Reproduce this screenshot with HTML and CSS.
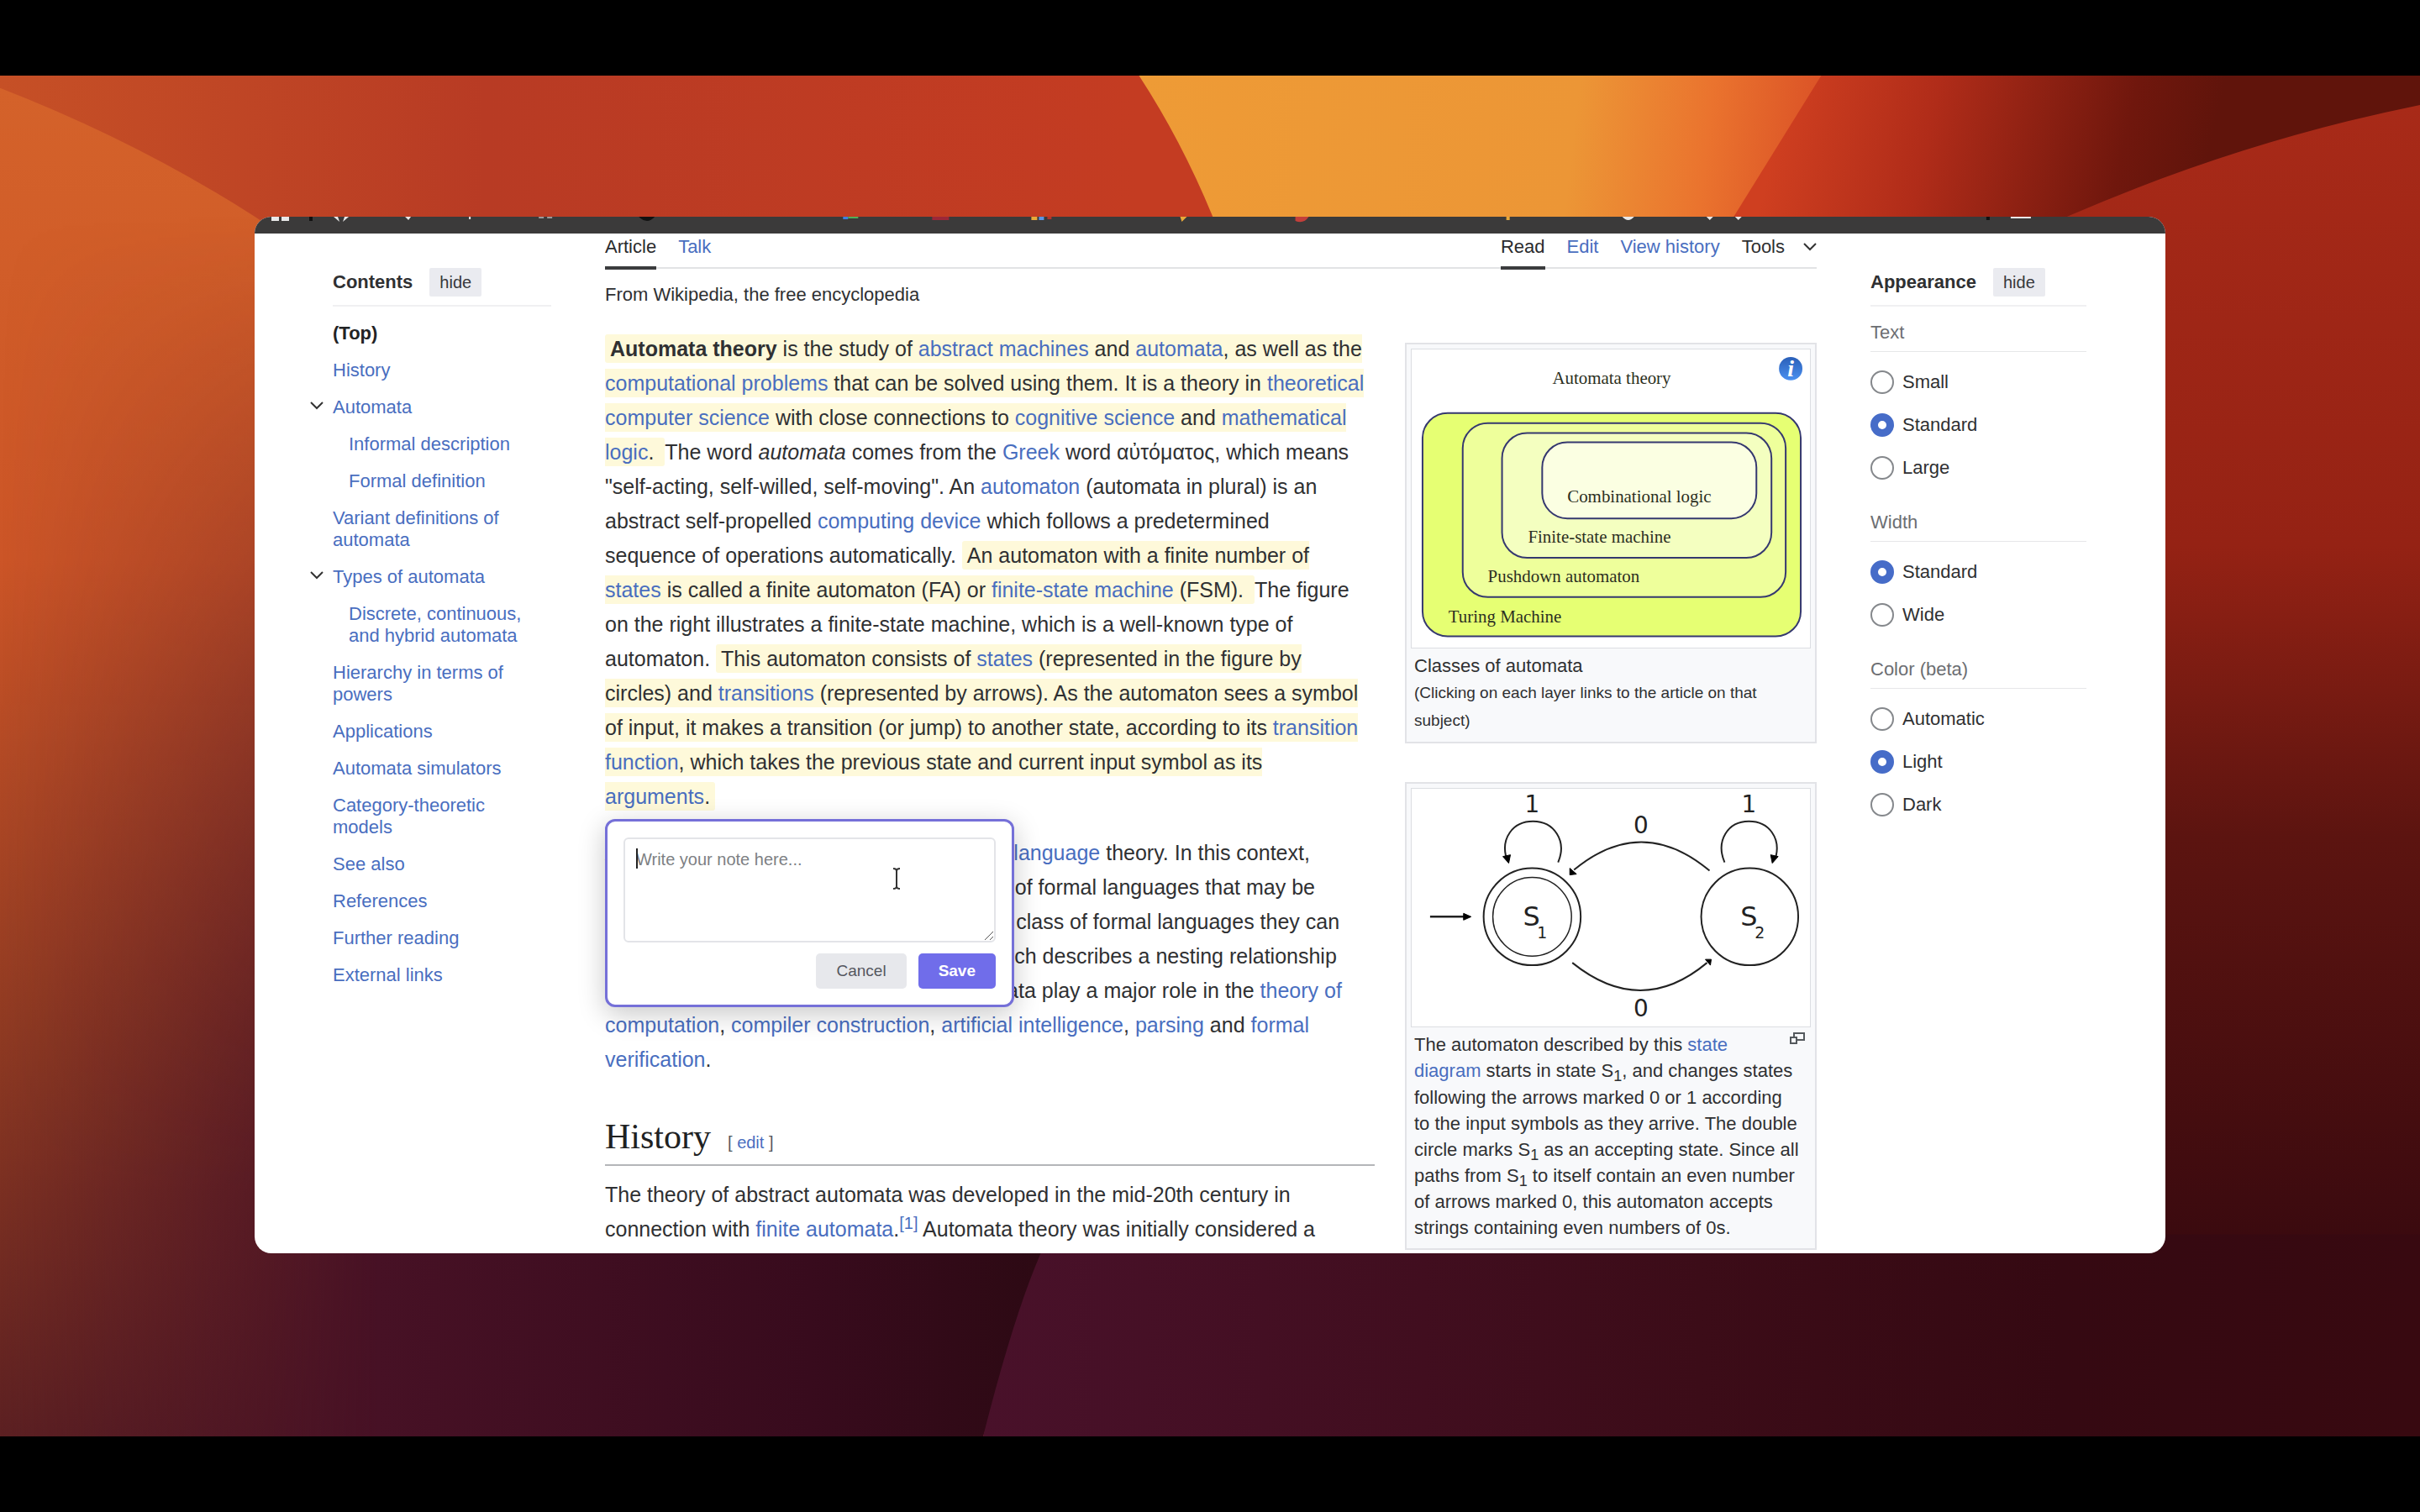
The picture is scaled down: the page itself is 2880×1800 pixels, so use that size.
FILE: index.html
```html
<!DOCTYPE html>
<html lang="en">
<head>
<meta charset="utf-8">
<title>Automata theory - Wikipedia</title>
<link rel="stylesheet" href="styles.css">
</head>
<body>

<div class="desktop">
    <svg class="wallpaper" viewBox="0 49 1568 882" preserveAspectRatio="none" aria-hidden="true">
        <defs>
            <linearGradient id="base" x1="0" y1="0" x2="1" y2="0">
                <stop offset="0" stop-color="#c65026"/>
                <stop offset="0.2" stop-color="#b83b24"/>
                <stop offset="0.47" stop-color="#c43c22"/>
            </linearGradient>
            <linearGradient id="left" x1="0" y1="0" x2="0" y2="1">
                <stop offset="0" stop-color="#d4622a"/>
                <stop offset="0.35" stop-color="#cc5527"/>
                <stop offset="0.7" stop-color="#8f3a22"/>
                <stop offset="1" stop-color="#5c2022"/>
            </linearGradient>
            <linearGradient id="left-shade" x1="0" y1="0" x2="1" y2="0">
                <stop offset="0" stop-color="#471125" stop-opacity="0"/>
                <stop offset="0.35" stop-color="#471125"/>
                <stop offset="0.75" stop-color="#380b1d"/>
                <stop offset="1" stop-color="#2b0912"/>
            </linearGradient>
            <linearGradient id="shade-fade" x1="0" y1="0" x2="0" y2="1">
                <stop offset="0" stop-color="#000"/>
                <stop offset="0.8" stop-color="#fff"/>
            </linearGradient>
            <mask id="lower" maskContentUnits="userSpaceOnUse">
                <rect x="0" y="140" width="700" height="791" fill="url(#shade-fade)"/>
            </mask>
            <linearGradient id="wedge" gradientUnits="userSpaceOnUse" x1="738" y1="60" x2="1170" y2="110">
                <stop offset="0" stop-color="#ee9b36"/>
                <stop offset="0.65" stop-color="#ec9636"/>
                <stop offset="0.85" stop-color="#ea732e"/>
                <stop offset="1" stop-color="#dc5527"/>
            </linearGradient>
            <linearGradient id="fold" gradientUnits="userSpaceOnUse" x1="1150" y1="90" x2="1420" y2="150">
                <stop offset="0" stop-color="#cf3f20"/>
                <stop offset="0.35" stop-color="#b02c19"/>
                <stop offset="0.8" stop-color="#70170d"/>
                <stop offset="1" stop-color="#60140b"/>
            </linearGradient>
            <linearGradient id="right" x1="0" y1="0" x2="0" y2="1">
                <stop offset="0" stop-color="#a82a18"/>
                <stop offset="0.33" stop-color="#952214"/>
                <stop offset="0.55" stop-color="#5c1410"/>
                <stop offset="0.85" stop-color="#3b0a0f"/>
                <stop offset="1" stop-color="#330811"/>
            </linearGradient>
            <linearGradient id="bottom" x1="0" y1="0" x2="1" y2="0">
                <stop offset="0" stop-color="#49112a"/>
                <stop offset="0.5" stop-color="#3c0c18"/>
                <stop offset="0.75" stop-color="#350912"/>
                <stop offset="1" stop-color="#380910"/>
            </linearGradient>
        </defs>
        <rect x="0" y="49" width="1568" height="882" fill="url(#base)"/>
        <path d="M0 57Q90 92 166 141L700 500L676 813L637 931H0Z" fill="url(#left)"/>
        <path d="M0 57Q90 92 166 141L700 500L676 813L637 931H0Z" fill="url(#left-shade)" mask="url(#lower)"/>
        <path d="M738 49Q766 92 786 141V300H1080L1125 141L1182 49Z" fill="url(#wedge)"/>
        <path d="M1180 49H1568V300H1100L1123 141Z" fill="url(#fold)"/>
        <path d="M1568 68Q1450 92 1338 141L1300 300V931H1568Z" fill="url(#right)"/>
        <path d="M680 800Q660 840 637 931H1568V800Z" fill="url(#bottom)"/>
    </svg>

    <div class="window">
        <svg class="browser-bar" viewBox="0 0 2273 20" preserveAspectRatio="none" aria-hidden="true">
            <path d="M20 0h9v5h-9zM32 0h9v5h-9zM94 0h5l2 6zM112 0h-5l-2 6zM179 0h7l-3 4zM255 0h2v3h-2zM2089 0h24v2h-24zM1627 0h14q-7 8-14 0zM1727 0h8l-4 4zM1761 0h8l-4 4z" fill="#e8e8e8"/>
            <path d="M338 0h6v2h-6zM348 0h6v2h-6z" fill="#9a9a9a"/>
            <path d="M65 0h4v5h-4zM457 0h19q-9 10-19 0zM2060 0h4v4h-4z" fill="#111"/>
            <path d="M700 0h6v3h-6z" fill="#3f7fe0"/>
            <path d="M706 0h12v2h-12z" fill="#4faf58"/>
            <path d="M806 0h20v4h-20z" fill="#9c2738"/>
            <path d="M924 0h7v4h-7zM1101 0h8l-6 6zM1489 0h4v4h-4z" fill="#e8a93a"/>
            <path d="M933 0h6v4h-6z" fill="#5a94e6"/>
            <path d="M943 0h5v3h-5z" fill="#b3342c"/>
            <path d="M1238 0h16q-6 9-16 5z" fill="#c33f3a"/>
        </svg>

        <div class="page">
            <nav class="contents">
                <div class="panel-title">
                    <h2>Contents</h2>
                    <button type="button">hide</button>
                </div>
                <ul>
                    <li><a class="current" href="#top">(Top)</a></li>
                    <li><a href="#history">History</a></li>
                    <li>
                        <svg class="toggle" viewBox="0 0 16 10"><path d="M1 1l7 7 7-7"/></svg>
                        <a href="#automata">Automata</a>
                        <ul>
                            <li><a href="#informal">Informal description</a></li>
                            <li><a href="#formal">Formal definition</a></li>
                        </ul>
                    </li>
                    <li><a href="#variants">Variant definitions of automata</a></li>
                    <li>
                        <svg class="toggle" viewBox="0 0 16 10"><path d="M1 1l7 7 7-7"/></svg>
                        <a href="#types">Types of automata</a>
                        <ul>
                            <li><a href="#discrete">Discrete, continuous, and hybrid automata</a></li>
                        </ul>
                    </li>
                    <li><a href="#hierarchy">Hierarchy in terms of powers</a></li>
                    <li><a href="#applications">Applications</a></li>
                    <li><a href="#simulators">Automata simulators</a></li>
                    <li><a href="#category">Category-theoretic models</a></li>
                    <li><a href="#see-also">See also</a></li>
                    <li><a href="#references">References</a></li>
                    <li><a href="#further">Further reading</a></li>
                    <li><a href="#external">External links</a></li>
                </ul>
            </nav>

            <main id="top">
                <div class="tabs">
                    <a class="active" href="#article">Article</a>
                    <a href="#talk">Talk</a>
                    <span class="spacer"></span>
                    <a class="active" href="#read">Read</a>
                    <a href="#edit">Edit</a>
                    <a href="#view-history">View history</a>
                    <button class="tools" type="button">Tools
                        <svg viewBox="0 0 16 10"><path d="M1 1l7 7 7-7"/></svg>
                    </button>
                </div>
                <p class="tagline">From Wikipedia, the free encyclopedia</p>

                <div class="article">
                    <div class="prose">
                        <div class="noted">
                            <p><mark><b>Automata theory</b> is the study of <a href="#">abstract machines</a> and <a href="#">automata</a>, as well as the <a href="#">computational problems</a> that can be solved using them. It is a theory in <a href="#">theoretical computer science</a> with close connections to <a href="#">cognitive science</a> and <a href="#">mathematical logic</a>.&nbsp;</mark>The word <i>automata</i> comes from the <a href="#">Greek</a> word αὐτόματος, which means "self-acting, self-willed, self-moving". An <a href="#">automaton</a> (automata in plural) is an abstract self-propelled <a href="#">computing device</a> which follows a predetermined<br>sequence of operations automatically. <mark>An automaton with a finite number of<br><a href="#">states</a> is called a finite automaton (FA) or <a href="#">finite-state machine</a> (FSM).&nbsp;</mark>The figure on the right illustrates a finite-state machine, which is a well-known type of automaton. <mark>This automaton consists of <a href="#">states</a> (represented in the figure by<br>circles) and <a href="#">transitions</a> (represented by arrows). As the automaton sees a symbol of input, it makes a transition (or jump) to another state, according to its <a href="#">transition function</a>, which takes the previous state and current input symbol as its <a href="#">arguments</a>.</mark></p>

                            <form class="note">
                                <label class="note-field">
                                    <textarea aria-label="Note" placeholder="Write your note here..."></textarea>
                                    <span class="caret"></span>
                                    <svg class="grip" viewBox="0 0 12 12"><path d="M1 11L11 1M7 11l4-4"/></svg>
                                    <svg class="ibeam" viewBox="0 0 12 28"><path d="M2 2q4 0 4 3q0-3 4-3M6 5v18M2 26q4 0 4-3q0 3 4 3"/></svg>
                                </label>
                                <div class="note-actions">
                                    <button class="cancel" type="button">Cancel</button>
                                    <button class="save" type="button">Save</button>
                                </div>
                            </form>
                        </div>

                        <p>Automata theory is closely related to <a href="#">formal language</a> theory. In this context, automata are used as finite representations of formal languages that may be infinite. Automata are often classified by the class of formal languages they can recognize, as in the Chomsky hierarchy, which describes a nesting relationship between major classes of automata. Automata play a major role in the <a href="#">theory of computation</a>, <a href="#">compiler construction</a>, <a href="#">artificial intelligence</a>, <a href="#">parsing</a> and <a href="#">formal verification</a>.</p>

                        <div class="section-title" id="history">
                            <h2>History</h2>
                            <span>[ <a href="#">edit</a> ]</span>
                        </div>
                        <p>The theory of abstract automata was developed in the mid-20th century in connection with <a href="#">finite automata</a>.<sup><a href="#">[1]</a></sup> Automata theory was initially considered a</p>
                    </div>

                    <aside class="figures">
                        <figure>
                            <svg class="picture" viewBox="-1 2 476 356">
                                <defs>
                                    <linearGradient id="info" x1="0" y1="0" x2="0" y2="1">
                                        <stop offset="0" stop-color="#2a5fb8"/>
                                        <stop offset="1" stop-color="#4a90f0"/>
                                    </linearGradient>
                                </defs>
                                <g stroke="#35386f" stroke-width="2">
                                    <rect x="12" y="78" width="452" height="267" rx="30" fill="#e6ff73"/>
                                    <rect x="60" y="90" width="386" height="208" rx="30" fill="#eeff9b"/>
                                    <rect x="107" y="102" width="322" height="149" rx="30" fill="#f4ffc0"/>
                                    <rect x="155" y="113" width="256" height="91" rx="30" fill="#fbffe2"/>
                                </g>
                                <g class="layer-names">
                                    <text x="238" y="43" text-anchor="middle">Automata theory</text>
                                    <text x="185" y="185">Combinational logic</text>
                                    <text x="138" y="233">Finite-state machine</text>
                                    <text x="90" y="280">Pushdown automaton</text>
                                    <text x="43" y="328">Turing Machine</text>
                                </g>
                                <circle cx="452" cy="25" r="14" fill="url(#info)"/>
                                <text class="info-letter" x="452" y="34" text-anchor="middle">i</text>
                            </svg>
                            <figcaption>Classes of automata<small>(Clicking on each layer links to the article on that subject)</small></figcaption>
                        </figure>

                        <figure>
                            <svg class="picture" viewBox="0 2 476 285">
                                <g fill="none" stroke="#222" stroke-width="2">
                                    <circle cx="144" cy="155" r="58"/>
                                    <circle cx="144" cy="155" r="47" stroke-width="1.5"/>
                                    <circle cx="404" cy="155" r="58"/>
                                    <path d="M175 90C186 64 170 41 145 41S107 62 113 84"/>
                                    <path d="M374 90C363 64 378 41 403 41S441 62 435 84"/>
                                    <path d="M356 100Q275 32 194 99"/>
                                    <path d="M192 210Q274 276 353 210"/>
                                    <path d="M22 155H64" stroke-width="2.5"/>
                                </g>
                                <path d="M109 83l9-2-2 10zM438 83l-9-2 2 10zM189 105v-8l8 7zM358 206l-7 0 6 7zM71 155l-9-4v8z" stroke="#000" fill="#000"/>
                                <g class="state-names">
                                    <text x="144" y="30" text-anchor="middle">1</text>
                                    <text x="403" y="30" text-anchor="middle">1</text>
                                    <text x="274" y="55" text-anchor="middle">0</text>
                                    <text x="274" y="274" text-anchor="middle">0</text>
                                    <text class="state" x="133" y="166">S</text>
                                    <text class="index" x="150" y="181">1</text>
                                    <text class="state" x="393" y="166">S</text>
                                    <text class="index" x="410" y="181">2</text>
                                </g>
                            </svg>
                            <figcaption><svg class="enlarge" viewBox="0 0 18 14"><path d="M5 6V1h12v8h-8M1 6h7v7H1z"/></svg>The automaton described by this <a href="#">state diagram</a> starts in state S<sub>1</sub>, and changes states following the arrows marked 0 or 1 according to the input symbols as they arrive. The double circle marks S<sub>1</sub> as an accepting state. Since all paths from S<sub>1</sub> to itself contain an even number of arrows marked 0, this automaton accepts strings containing even numbers of 0s.</figcaption>
                        </figure>
                    </aside>
                </div>
            </main>

            <aside class="appearance">
                <div class="panel-title">
                    <h2>Appearance</h2>
                    <button type="button">hide</button>
                </div>
                <fieldset>
                    <legend>Text</legend>
                    <label><input type="radio" name="text">Small</label>
                    <label><input type="radio" name="text" checked>Standard</label>
                    <label><input type="radio" name="text">Large</label>
                </fieldset>
                <fieldset>
                    <legend>Width</legend>
                    <label><input type="radio" name="width" checked>Standard</label>
                    <label><input type="radio" name="width">Wide</label>
                </fieldset>
                <fieldset>
                    <legend>Color (beta)</legend>
                    <label><input type="radio" name="color">Automatic</label>
                    <label><input type="radio" name="color" checked>Light</label>
                    <label><input type="radio" name="color">Dark</label>
                </fieldset>
            </aside>
        </div>
    </div>
</div>

</body>
</html>
```

FILE: styles.css
```css
* {
    box-sizing: border-box;
}

body {
    background-color: black;
    color: #2f3032;
    font-family: "Liberation Sans", Arial, sans-serif;
    font-size: 22px;
    height: 100vh;
    line-height: 26px;
    margin: 0;
    padding: 90px 0;
}

a {
    color: #496ebf;
    text-decoration: none;
}

h2, p, ul, figure, fieldset {
    margin: 0;
    padding: 0;
}

ul {
    list-style: none;
}

button {
    border-style: none;
    font-family: inherit;
}

.desktop {
    display: flex;
    height: 100%;
    padding: 168px 303px 218px;
    position: relative;
}

.wallpaper {
    height: 100%;
    left: 0;
    position: absolute;
    top: 0;
    width: 100%;
}

.window {
    background-color: white;
    border-radius: 20px;
    flex: 1;
    overflow: hidden;
    position: relative;
}

.browser-bar {
    background-color: #3b3a3a;
    display: block;
    height: 20px;
    width: 100%;
}

.page {
    display: grid;
    gap: 64px;
    grid-template-columns: 260px minmax(0, 1fr) 257px;
    padding: 0 94px 0 93px;
}

/* side panels */

.contents, .appearance {
    padding-top: 41px;
}

.panel-title {
    align-items: center;
    border-bottom: 2px solid #f0f0f2;
    display: flex;
    gap: 20px;
    padding-bottom: 10px;
}

.panel-title h2 {
    font-size: 22px;
}

.panel-title button {
    background-color: #eaebf0;
    border-radius: 2px;
    color: #37383b;
    font-size: 20px;
    height: 34px;
    padding: 0 12px;
}

.contents>ul {
    padding-top: 10px;
}

.contents li {
    position: relative;
}

.contents li a {
    display: block;
    padding: 9px 8px 9px 0;
}

.contents li ul {
    padding-left: 19px;
}

.contents .current {
    color: #222325;
    font-weight: bold;
}

.toggle, .tools svg {
    fill: none;
    height: 10px;
    stroke: #333;
    stroke-width: 2;
    width: 16px;
}

.toggle {
    left: -27px;
    position: absolute;
    top: 15px;
}

fieldset {
    border-style: none;
    min-width: 0;
    padding-bottom: 9px;
}

legend {
    border-bottom: 1px solid #e6e7e9;
    color: #6c6e72;
    margin-bottom: 10px;
    padding: 18px 0 9px;
    width: 100%;
}

fieldset label {
    align-items: center;
    display: flex;
    gap: 10px;
    height: 51px;
}

input[type="radio"] {
    appearance: none;
    background-color: white;
    border: 2px solid #85888c;
    border-radius: 50%;
    height: 28px;
    margin: 0;
    width: 28px;
}

input[type="radio"]:checked {
    border: 9px solid #466cc8;
}

/* article */

.tabs {
    border-bottom: 2px solid #e2e3e5;
    display: flex;
    gap: 26px;
    height: 42px;
}

.tabs a {
    height: 43px;
    padding-top: 3px;
}

.tabs .active {
    border-bottom: 4px solid #3b3c3e;
    color: #2a2b2d;
}

.spacer {
    flex: 1;
}

.tools {
    align-items: center;
    background: none;
    color: inherit;
    display: flex;
    font-size: 22px;
    gap: 22px;
    height: 32px;
    line-height: 26px;
    padding: 0;
}

.tagline {
    margin: 18px 0 31px;
}

.article {
    display: grid;
    gap: 36px;
    grid-template-columns: minmax(0, 1fr) 490px;
}

.prose {
    font-size: 25px;
    line-height: 41px;
}

.noted {
    margin-bottom: 26px;
    position: relative;
}

mark {
    background-color: #fef9da;
    border-radius: 3px;
    color: inherit;
    padding: 3px 6px;
}

.section-title {
    align-items: baseline;
    border-bottom: 2px solid #b4b6b9;
    display: flex;
    gap: 20px;
    margin: 45px 0 14px;
    padding-bottom: 5px;
}

.section-title h2 {
    color: #202122;
    font-family: "Liberation Serif", Georgia, serif;
    font-size: 42px;
    font-weight: normal;
    line-height: 52px;
}

.section-title span {
    color: #54595d;
    font-size: 20px;
}

sup {
    font-size: 20px;
    line-height: 1;
}

.figures {
    padding-top: 13px;
}

figure {
    background-color: #f8f9fb;
    border: 2px solid #e2e3e7;
    margin-bottom: 46px;
    padding: 5px;
}

.picture {
    background-color: white;
    border: 1px solid #dcdee2;
    display: block;
    width: 100%;
}

.layer-names {
    fill: #2c2f22;
    font-family: "Liberation Serif", serif;
    font-size: 21px;
}

.info-letter {
    fill: white;
    font-family: "Liberation Serif", serif;
    font-size: 28px;
    font-style: italic;
    font-weight: bold;
}

.state-names {
    fill: #222;
    font-family: "DejaVu Sans", sans-serif;
    font-size: 28px;
}

.state {
    font-size: 32px;
}

.index {
    font-size: 19px;
}

figcaption {
    line-height: 31px;
    padding: 5px 13px 4px 4px;
}

small {
    display: block;
    font-size: 19px;
    line-height: 33px;
}

sub {
    font-size: 18px;
    line-height: 1;
}

.enlarge {
    fill: none;
    float: right;
    height: 14px;
    margin: 1px -6px 0 24px;
    stroke: #54595d;
    stroke-width: 2;
    width: 18px;
}

/* note pop-up, lies over the text that follows the highlight */

.note {
    background-color: white;
    border: 3px solid #7570d8;
    border-radius: 12px;
    box-shadow: 0 8px 32px rgba(0, 0, 0, 0.22);
    left: 0;
    margin-top: 6px;
    padding: 19px;
    position: absolute;
    top: 100%;
    width: 487px;
    z-index: 1;
}

.note-field {
    display: block;
    position: relative;
}

.note textarea {
    border: 2px solid #e3e4e8;
    border-radius: 6px;
    color: inherit;
    display: block;
    font-family: inherit;
    font-size: 20px;
    height: 125px;
    line-height: 24px;
    outline: none;
    padding: 12px 13px;
    resize: none;
    width: 100%;
}

.note textarea::placeholder {
    color: #7d7f83;
}

.caret {
    background-color: #222;
    height: 24px;
    left: 15px;
    position: absolute;
    top: 13px;
    width: 2px;
}

.grip, .ibeam {
    fill: none;
    position: absolute;
    stroke: #555;
}

.grip {
    bottom: 2px;
    height: 12px;
    right: 2px;
    width: 12px;
}

.ibeam {
    height: 28px;
    left: 319px;
    stroke: #333;
    stroke-width: 2;
    top: 35px;
    width: 12px;
}

.note-actions {
    display: flex;
    gap: 14px;
    justify-content: flex-end;
    padding: 13px 0 0;
}

.note-actions button {
    border-radius: 5px;
    font-size: 19px;
    height: 42px;
}

.cancel {
    background-color: #e7e8ec;
    color: #55575f;
    padding: 0 24px;
}

.save {
    background-color: #706dea;
    color: white;
    font-weight: bold;
    padding: 0 24px;
}
```
